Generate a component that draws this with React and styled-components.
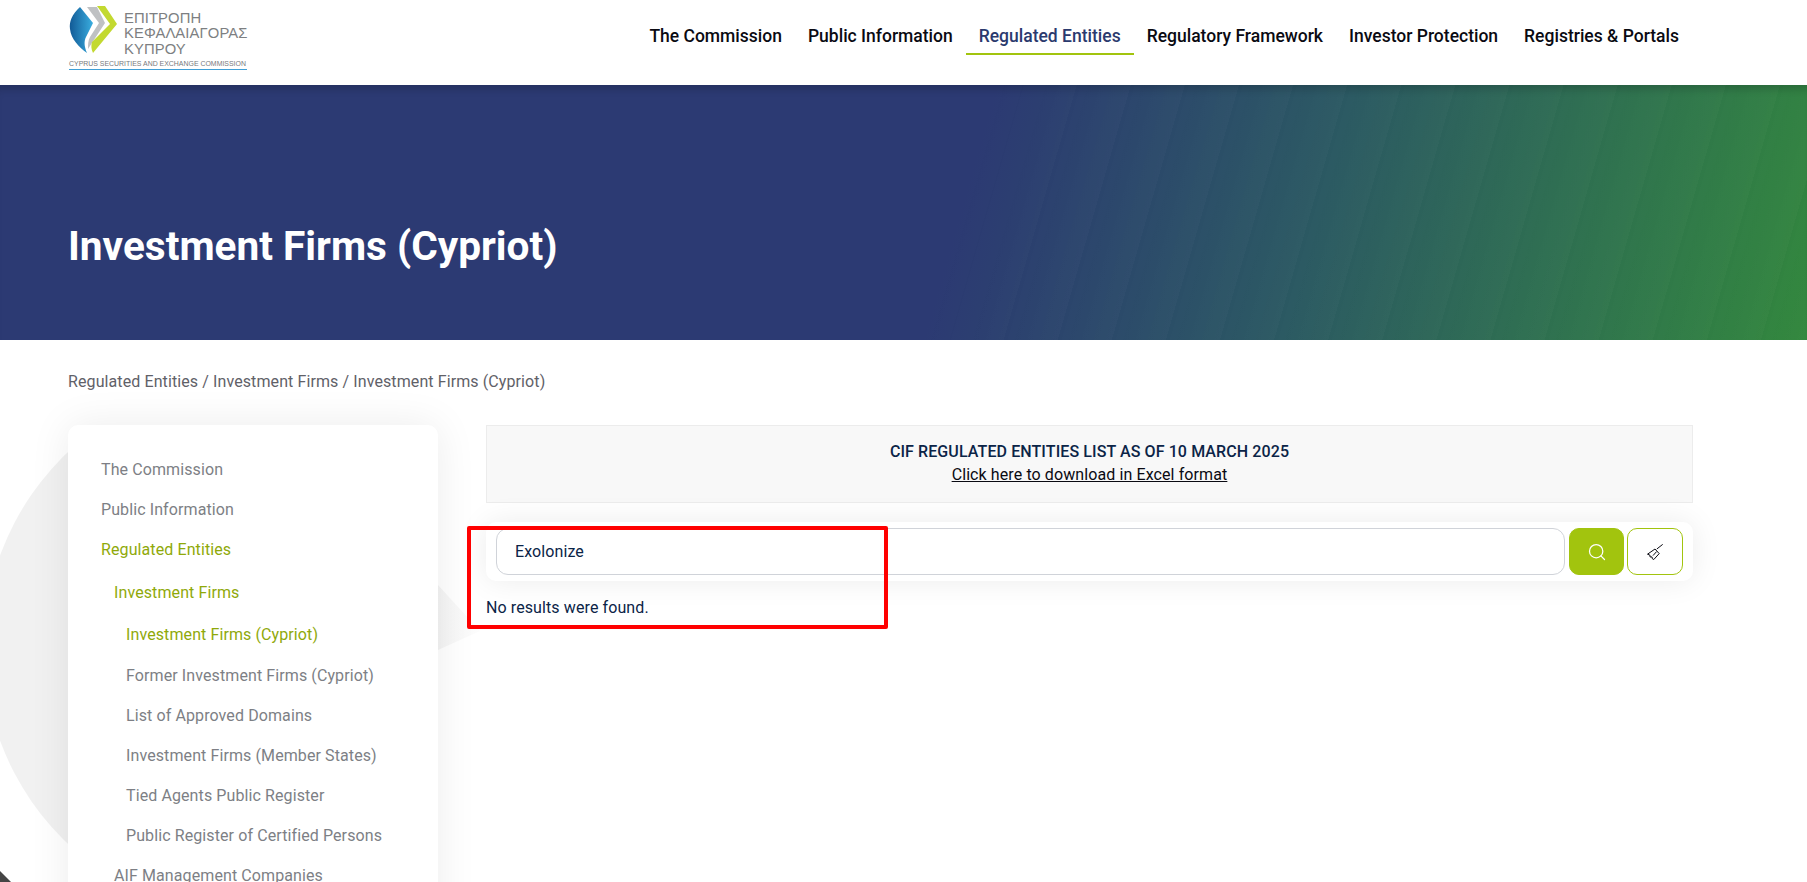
import React from "react";
import styled, { createGlobalStyle } from "styled-components";
import { Search } from "lucide-react";

const Global = createGlobalStyle`
  html, body { margin: 0; padding: 0; height: 882px; overflow: hidden; background: #fff; }
  body { font-family: Roboto, "Liberation Sans", sans-serif; font-size: 16px; letter-spacing: 0.1px; color: #0b2447; }
  * { box-sizing: border-box; }
`;

const Page = styled.div`
  position: relative;
  width: 1807px;
  height: 882px;
  overflow: hidden;
  background: #fff;
`;

const Watermark = styled.svg`
  position: absolute;
  left: 0;
  top: 0;
  z-index: 0;
`;

const Corner = styled.div`
  position: absolute;
  left: 0;
  bottom: 0;
  width: 11px;
  height: 11px;
  background: #454545;
  clip-path: polygon(0 0, 100% 100%, 0 100%);
  z-index: 3;
`;

const Header = styled.header`
  position: relative;
  z-index: 2;
  height: 85px;
  background: #fff;
  display: flex;
  align-items: flex-start;
  justify-content: space-between;
  padding: 5px 114px 0 69px;
`;

const Logo = styled.a`
  display: block;
  width: 178px;
  flex: none;
`;

const LogoTop = styled.div`
  display: flex;
  align-items: flex-start;
  height: 54px;
`;

const LogoMark = styled.svg`
  flex: none;
  display: block;
`;

const LogoWords = styled.div`
  margin: 5.5px 0 0 5px;
  font-family: "Liberation Sans", Arial, sans-serif;
  font-size: 14.8px;
  line-height: 15.5px;
  color: #7d7f82;
  letter-spacing: 0.1px;
  white-space: nowrap;
`;

const LogoCaption = styled.div`
  font-family: "Liberation Sans", Arial, sans-serif;
  font-size: 6.95px;
  line-height: 8px;
  letter-spacing: 0;
  color: #77797c;
  white-space: nowrap;
  border-bottom: 1.5px solid #3f9fd6;
  padding-bottom: 1px;
  margin-top: 1px;
`;

const Nav = styled.nav`
  display: flex;
  margin-right: 1px;
`;

const NavItem = styled.a`
  height: 50px;
  padding: 20px 13px 0;
  line-height: 23px;
  font-size: 17.5px;
  font-weight: 500;
  letter-spacing: 0;
  white-space: nowrap;
  color: ${(p) => (p.$active ? "#2b3a6e" : "#0a0a12")};
  border-bottom: 2px solid ${(p) => (p.$active ? "#a2c40e" : "transparent")};
`;

const Hero = styled.section`
  position: relative;
  z-index: 1;
  height: 255px;
  padding: 66px 68px 0;
  display: flex;
  align-items: center;
  background: linear-gradient(106deg, #2c3a73 53%, #2c5a63 72%, #33883e 100%);
  box-shadow: inset 0 10px 8px -6px rgba(0, 0, 0, 0.18);
  overflow: hidden;

  &::before {
    content: "";
    position: absolute;
    inset: 0;
    background: repeating-linear-gradient(106deg, rgba(255, 255, 255, 0) 0, rgba(255, 255, 255, 0.014) 47px, rgba(0, 0, 0, 0.008) 47px, rgba(255, 255, 255, 0) 52px);
    -webkit-mask-image: linear-gradient(106deg, transparent 52%, #000 60%);
    mask-image: linear-gradient(106deg, transparent 52%, #000 60%);
  }
`;

const Title = styled.h1`
  position: relative;
  margin: 0;
  color: #fff;
  font-size: 40.6px;
  line-height: 50px;
  font-weight: 700;
  letter-spacing: 0;
`;

const Crumbs = styled.div`
  position: relative;
  z-index: 1;
  padding: 30px 68px 31px;
  line-height: 24px;
  color: #5f6168;
`;

const Columns = styled.div`
  position: relative;
  z-index: 1;
  display: flex;
  gap: 48px;
  padding: 0 114px 0 68px;
  align-items: flex-start;
`;

const Sidebar = styled.aside`
  flex: none;
  width: 370px;
  height: 640px;
  padding: 33px 33px;
  background: #fff;
  border-radius: 10px;
  box-shadow: 0 0 40px rgba(0, 0, 0, 0.08);
`;

const SideList = styled.ul`
  list-style: none;
  margin: 0;
  padding: 0;
`;

const SideRow = styled.li`
  line-height: 24px;
  margin-bottom: ${(p) => (p.$open ? "0" : "16px")};
  color: ${(p) => (p.$active ? "#8fa90a" : "#7d7f85")};
  white-space: nowrap;
`;

const FirmGroup = styled(SideList)`
  margin-top: 19px;
  padding-left: 13px;
`;

const SubList = styled(SideList)`
  margin-top: 18px;
  padding-left: 12px;

  & > li:first-child {
    margin-bottom: 17px;
  }
`;

const SubGroupEnd = styled(SideRow)`
  margin-top: 6px;
`;

const Main = styled.main`
  position: relative;
  flex: 1;
  min-width: 0;
`;

const Notice = styled.div`
  height: 78px;
  padding: 14px 16px 15px;
  text-align: center;
  line-height: 23px;
  background: #f8f8f8;
  border: 1px solid #ececec;
`;

const NoticeTitle = styled.div`
  font-weight: 500;
`;

const NoticeLink = styled.a`
  color: #0a0a12;
  text-decoration: underline;
`;

const SearchBar = styled.form`
  display: flex;
  align-items: stretch;
  gap: 3px;
  margin-top: 19px;
  height: 59px;
  padding: 6px 10px;
  background: #fff;
  border-radius: 10px;
  box-shadow: 0 0 30px rgba(0, 0, 0, 0.08);
`;

const SearchInput = styled.div`
  flex: 1;
  padding-left: 18px;
  display: flex;
  align-items: center;
  background: #fff;
  border: 1px solid #d0d3d9;
  border-radius: 12px;
  color: #0b2447;
`;

const IconButton = styled.button`
  flex: none;
  width: ${(p) => (p.$filled ? "55px" : "56px")};
  margin-left: ${(p) => (p.$filled ? "1px" : "0")};
  padding: 0;
  display: flex;
  align-items: center;
  justify-content: center;
  border-radius: 10px;
  border: 1px solid #a2c40e;
  background: ${(p) => (p.$filled ? "#a2c40e" : "#fff")};
  color: ${(p) => (p.$filled ? "#fff" : "#0a0a12")};
`;

const Empty = styled.p`
  margin: 15px 0 0 0;
  line-height: 24px;
`;

const Highlight = styled.div`
  position: absolute;
  left: -19px;
  top: 101px;
  width: 421px;
  height: 103px;
  border: 4px solid #ff0000;
  border-radius: 2px;
  pointer-events: none;
`;

const BroomIcon = () => (
  <svg width="16" height="16" viewBox="0 0 16 16" fill="none" stroke="currentColor" strokeWidth="1">
    <path d="M15.7 .4 9.8 5" />
    <path d="M8 5 .5 10.2l2.4.9.2 1.9 1.9-.1.4 1.9 1.4.7L12.2 9.6Z" strokeLinejoin="round" />
    <path d="M9.6 7.6 6 11.6" />
  </svg>
);

const top = ["The Commission", "Public Information", "Regulated Entities", "Regulatory Framework", "Investor Protection", "Registries & Portals"];
const firms = ["Former Investment Firms (Cypriot)", "List of Approved Domains", "Investment Firms (Member States)", "Tied Agents Public Register", "Public Register of Certified Persons"];

export default function App() {
  return (
    <Page>
      <Global />
      <Watermark width="520" height="882" viewBox="0 0 520 882">
        <defs>
          <linearGradient id="fade" gradientUnits="userSpaceOnUse" x1="430" x2="482" y1="0" y2="0">
            <stop offset="0" stopColor="#f1f1f1" />
            <stop offset="0.3" stopColor="#f6f6f6" />
            <stop offset="1" stopColor="#fdfdfd" />
          </linearGradient>
        </defs>
        <path d="M100 426A270 270 0 0 0 100 870L438 650 480 631 438 585 300 430Z" fill="url(#fade)" />
      </Watermark>
      <Header>
        <Logo>
          <LogoTop>
            <LogoMark width="50" height="50" viewBox="69 5 50 50">
              <defs>
                <linearGradient id="leaf" x1="0" x2="1" y1="0" y2="0">
                  <stop offset="0" stopColor="#125a96" />
                  <stop offset="1" stopColor="#3aaee0" />
                </linearGradient>
              </defs>
              <path d="M80 7C72 14 69 22 70 29 71 39 79 47 87 53 84 46 84 41 86 37L93 23Z" fill="url(#leaf)" />
              <path d="M87 7H97L105 23 88 49C88 44 88 41 90 37L99 23Z" fill="#bfc1c3" />
              <path d="M97 6H105L117 24 93 53C91 49 91 45 92 42L110 24Z" fill="#c3d930" />
            </LogoMark>
            <LogoWords>
              ΕΠΙΤΡΟΠΗ
              <br />
              ΚΕΦΑΛΑΙΑΓΟΡΑΣ
              <br />
              ΚΥΠΡΟΥ
            </LogoWords>
          </LogoTop>
          <LogoCaption>CYPRUS SECURITIES AND EXCHANGE COMMISSION</LogoCaption>
        </Logo>
        <Nav>
          {top.map((t) => (
            <NavItem key={t} $active={t === "Regulated Entities"}>{t}</NavItem>
          ))}
        </Nav>
      </Header>
      <Hero>
        <Title>Investment Firms (Cypriot)</Title>
      </Hero>
      <Crumbs>Regulated Entities / Investment Firms / Investment Firms (Cypriot)</Crumbs>
      <Columns>
        <Sidebar>
          <SideList>
            <SideRow>The Commission</SideRow>
            <SideRow>Public Information</SideRow>
            <SideRow $active $open>
              Regulated Entities
              <FirmGroup>
                <SideRow $active $open>
                  Investment Firms
                  <SubList>
                    <SideRow $active>Investment Firms (Cypriot)</SideRow>
                    {firms.map((f) => (
                      <SideRow key={f}>{f}</SideRow>
                    ))}
                  </SubList>
                </SideRow>
                <SubGroupEnd>AIF Management Companies</SubGroupEnd>
              </FirmGroup>
            </SideRow>
          </SideList>
        </Sidebar>
        <Main>
          <Notice>
            <NoticeTitle>CIF REGULATED ENTITIES LIST AS OF 10 MARCH 2025</NoticeTitle>
            <NoticeLink>Click here to download in Excel format</NoticeLink>
          </Notice>
          <SearchBar>
            <SearchInput>Exolonize</SearchInput>
            <IconButton type="button" $filled>
              <Search size={20} strokeWidth={1.5} />
            </IconButton>
            <IconButton type="button">
              <BroomIcon />
            </IconButton>
          </SearchBar>
          <Empty>No results were found.</Empty>
          <Highlight />
        </Main>
      </Columns>
      <Corner />
    </Page>
  );
}
